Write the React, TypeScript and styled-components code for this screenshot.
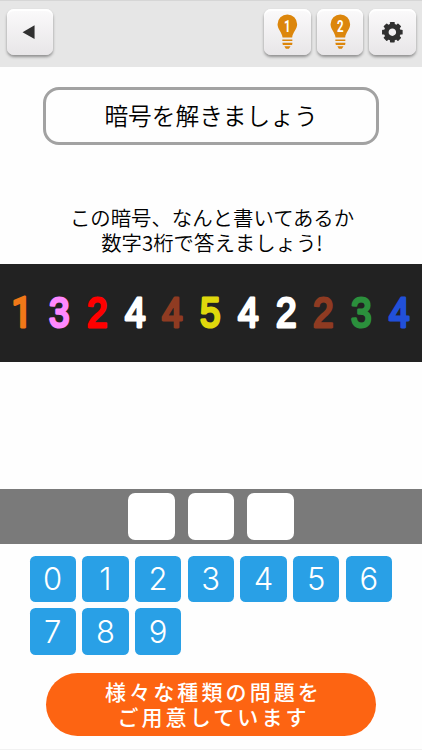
import React from 'react';
import styled, { createGlobalStyle } from 'styled-components';

const Global = createGlobalStyle`
  * { box-sizing: border-box; }
  html, body { margin: 0; background: #fefefe; }
  body { font-family: "Noto Sans CJK JP", sans-serif; overflow: hidden; }
  button { font: inherit; border: 0; padding: 0; margin: 0; }
`;

const Screen = styled.main`
  width: 422px;
  height: 750px;
  display: flex;
  flex-direction: column;
  align-items: center;
  border-bottom: 1px solid #f1f1f1;
  background: #fefefe;
`;

const Toolbar = styled.header`
  width: 100%;
  height: 67px;
  flex: none;
  display: flex;
  gap: 6px;
  padding: 8px 6px 0 6.5px;
  border-top: 1px solid #d6d6d6;
  background: #e6e6e6;
`;

const ToolButton = styled.button<{ $first?: boolean }>`
  width: 46.7px;
  height: 46px;
  margin-right: ${p => (p.$first ? 'auto' : '0')};
  border-radius: 7px;
  background: linear-gradient(#fbfafb, #e8e6e8);
  box-shadow: 0 2px 3px rgba(0, 0, 0, 0.38), inset 0 2px 1px #fff;
  svg { display: block; width: 100%; height: 100%; }
`;

const Title = styled.h1`
  width: 336px;
  height: 58px;
  flex: none;
  margin: 20px 0 0;
  display: flex;
  align-items: center;
  justify-content: center;
  border: 3px solid #a2a2a2;
  border-radius: 16px;
  font-size: 23.7px;
  font-weight: 350;
  line-height: 1;
  color: #000;
`;

const Question = styled.p`
  height: 52px;
  flex: none;
  margin: 60px 0 7px;
  padding-left: 2px;
  font-size: 20.4px;
  font-weight: 350;
  line-height: 25px;
  text-align: center;
  white-space: nowrap;
  color: #000;
`;

const CodeBand = styled.section`
  width: 100%;
  height: 98px;
  flex: none;
  display: grid;
  grid-template-columns: repeat(11, 37.72px);
  justify-content: center;
  align-items: center;
  background: #222;
`;

const Glyph = styled.svg`
  display: block;
  width: 37.72px;
  height: 54px;
  overflow: visible;
`;

const GlyphText = styled.text<{ $color: string; $family: string }>`
  font-family: ${p => p.$family}, sans-serif;
  font-size: 42px;
  fill: ${p => p.$color};
  stroke: ${p => p.$color};
  stroke-width: 2.9px;
  stroke-linejoin: round;
`;

const AnswerBand = styled.section`
  width: 100%;
  height: 55px;
  flex: none;
  margin-top: 127px;
  display: flex;
  justify-content: center;
  align-items: center;
  gap: 13px;
  background: #7a7a7a;
`;

const AnswerBox = styled.div`
  width: 46.5px;
  height: 46.5px;
  border-radius: 7px;
  background: #fff;
`;

const Keypad = styled.section`
  width: 363px;
  flex: none;
  margin-top: 11.7px;
  display: grid;
  grid-template-columns: repeat(7, 46.4px);
  grid-auto-rows: 46.4px;
  gap: 6.3px;
`;

const Key = styled.button`
  border-radius: 5.5px;
  background: #29a0e6;
  color: #fff;
  font-family: Inter, "Open Sans", sans-serif;
  font-size: 31px;
  font-weight: 300;
  line-height: 46px;
`;

const Banner = styled.footer`
  width: 330px;
  height: 63px;
  flex: none;
  margin-top: 18px;
  padding: 6px 0 0 5px;
  border-radius: 32px;
  background: #fd6412;
  color: #fff;
  font-size: 21px;
  font-weight: 500;
  line-height: 25.5px;
  letter-spacing: 3.1px;
  text-align: center;
`;

const code: [string, string][] = [
  ['1', '#f07818'], ['3', '#ff88ff'], ['2', '#ff0000'], ['4', '#ffffff'],
  ['4', '#8f3b22'], ['5', '#dfd80c'], ['4', '#ffffff'], ['2', '#ffffff'],
  ['2', '#8f3b22'], ['3', '#2b903c'], ['4', '#2150d9'],
];

const BulbBody = styled.g`
  fill: #dc860c;
`;

const BulbNumber = styled.text`
  font-family: Roboto, sans-serif;
  font-size: 16.5px;
  font-weight: 700;
  fill: #fff;
`;

function CodeDigit({ n, color }: { n: string; color: string }) {
  const one = n === '1';
  return (
    <Glyph viewBox="0 0 37.72 54">
      <GlyphText
        $color={color}
        $family={one ? 'Roboto' : '"Liberation Sans"'}
        textAnchor="middle"
        transform={`translate(${one ? 17.8 : 18.4} 41.1) scale(.88 1)`}
      >
        {n}
      </GlyphText>
    </Glyph>
  );
}

function Bulb({ n }: { n: string }) {
  return (
    <svg viewBox="0 0 46 46">
      <BulbBody>
        <path d="M23 5.5a9.8 9.8 0 0 0-9.8 9.8c0 5.2 4.4 7.9 5 13.2h9.6c.6-5.3 5-8 5-13.2A9.8 9.8 0 0 0 23 5.5Z" />
        <path d="M18 30.5h10v1.5H18zM18 33.7h10v1.5l-.5.8h-9zM20 37.2h6.2L24.5 39.7h-3z" />
      </BulbBody>
      <BulbNumber textAnchor="middle" transform="translate(23 22.9) scale(.7 1)">{n}</BulbNumber>
    </svg>
  );
}

function Gear() {
  const teeth = [0, 45, 90, 135, 180, 225, 270, 315];
  return (
    <svg viewBox="0 0 46 46">
      <g transform="translate(23 23.2)" fill="#303030">
        {teeth.map(a => (
          <rect key={a} x="-2.4" y="-10.3" width="4.8" height="5" rx=".7" transform={`rotate(${a})`} />
        ))}
        <circle r="6.1" fill="none" stroke="#303030" strokeWidth="4.7" />
      </g>
    </svg>
  );
}

export default function App() {
  return (
    <>
      <Global />
      <Screen>
        <Toolbar>
          <ToolButton $first aria-label="戻る">
            <svg viewBox="0 0 46 46"><path d="M15.2 23.2 27.2 16.3V30Z" fill="#303030" /></svg>
          </ToolButton>
          <ToolButton><Bulb n="1" /></ToolButton>
          <ToolButton><Bulb n="2" /></ToolButton>
          <ToolButton aria-label="設定"><Gear /></ToolButton>
        </Toolbar>
        <Title>暗号を解きましょう</Title>
        <Question>この暗号、なんと書いてあるか<br />数字3桁で答えましょう!</Question>
        <CodeBand>
          {code.map(([n, color], i) => <CodeDigit key={i} n={n} color={color} />)}
        </CodeBand>
        <AnswerBand><AnswerBox /><AnswerBox /><AnswerBox /></AnswerBand>
        <Keypad>
          {Array.from({ length: 10 }, (_, i) => <Key key={i}>{i}</Key>)}
        </Keypad>
        <Banner>様々な種類の問題を<br />ご用意しています</Banner>
      </Screen>
    </>
  );
}
